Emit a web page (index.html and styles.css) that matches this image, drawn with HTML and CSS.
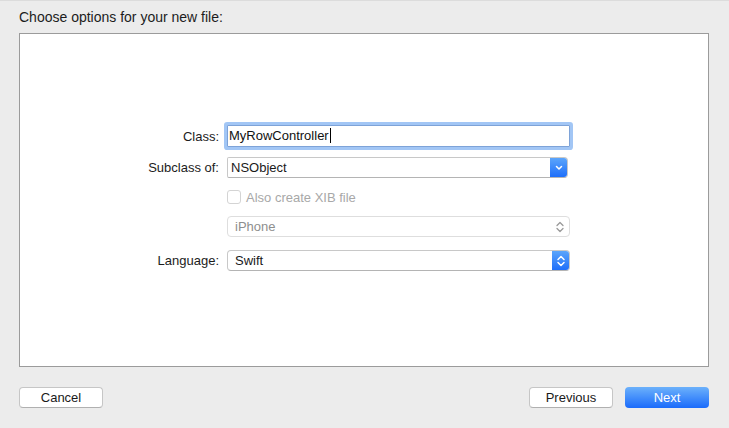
FILE: index.html
```html
<!DOCTYPE html>
<html>
<head>
<meta charset="utf-8">
<link rel="stylesheet" href="styles.css">
</head>
<body>
<div class="sheet">
  <div class="title">Choose options for your new file:</div>
  <div class="panel">
    <div class="form">
      <div class="row row-class">
        <div class="label">Class:</div>
        <div class="field focused"><span class="caret">MyRowController</span></div>
      </div>
      <div class="row row-sub">
        <div class="label">Subclass of:</div>
        <div class="popup narrow">
          <span class="ptext tight">NSObject</span>
          <span class="pbtn blue">
            <svg width="10" height="8" viewBox="0 0 10 8"><path d="M2.5 2.5 L5 5 L7.5 2.5" fill="none" stroke="#fff" stroke-width="1.5" stroke-linecap="round" stroke-linejoin="round"/></svg>
          </span>
        </div>
      </div>
      <div class="row row-check">
        <div class="label"></div>
        <div class="check"><span class="box"></span><span class="ctext">Also create XIB file</span></div>
      </div>
      <div class="row row-dev">
        <div class="label"></div>
        <div class="popup disabled">
          <span class="ptext">iPhone</span>
          <span class="pbtn">
            <svg width="10" height="14" viewBox="0 0 10 14"><path d="M2 5.5 L5 2.5 L8 5.5 M2 8.5 L5 11.5 L8 8.5" fill="none" stroke="#9a9a9a" stroke-width="1.3" stroke-linecap="round" stroke-linejoin="round"/></svg>
          </span>
        </div>
      </div>
      <div class="row row-lang">
        <div class="label">Language:</div>
        <div class="popup">
          <span class="ptext">Swift</span>
          <span class="pbtn blue">
            <svg width="10" height="14" viewBox="0 0 10 14"><path d="M2 5.5 L5 2.5 L8 5.5 M2 8.5 L5 11.5 L8 8.5" fill="none" stroke="#fff" stroke-width="1.5" stroke-linecap="round" stroke-linejoin="round"/></svg>
          </span>
        </div>
      </div>
    </div>
  </div>
  <div class="footer">
    <div class="btn cancel">Cancel</div>
    <div class="spacer"></div>
    <div class="btn prev">Previous</div>
    <div class="btn next">Next</div>
  </div>
</div>
</body>
</html>
```
FILE: styles.css
```css
html, body {
  margin: 0;
  padding: 0;
}
body {
  width: 729px;
  height: 428px;
  background: #ececec;
  font-family: "Liberation Sans", Arial, sans-serif;
  font-size: 13px;
  color: #1a1a1a;
  overflow: hidden;
}
.sheet {
  box-sizing: border-box;
  height: 428px;
  border-top: 1px solid #dcdcdc;
  padding: 0 20px 0 19px;
}
.title {
  height: 32px;
  font-size: 14px;
  line-height: 16px;
  padding-top: 8px;
  box-sizing: border-box;
  color: #1c1c1c;
}
.panel {
  box-sizing: border-box;
  width: 690px;
  height: 334px;
  background: #fff;
  border: 1px solid #9b9b9b;
  padding-top: 91px;
}
.form {
  display: flex;
  flex-direction: column;
}
.row {
  display: flex;
  align-items: center;
  gap: 8px;
}
.label {
  width: 199px;
  text-align: right;
  flex: none;
  color: #1c1c1c;
}
.row-sub { margin-top: 10px; }
.row-check { margin-top: 12px; }
.row-dev { margin-top: 12px; }
.row-lang { margin-top: 13px; }

.field {
  box-sizing: border-box;
  width: 343px;
  height: 22px;
  border: 1px solid #7ea3d8;
  border-radius: 1px;
  box-shadow: 0 0 0 3px #a2c6f5;
  background: #fff;
  padding: 0 1px;
  line-height: 20px;
  color: #111;
}
.caret {
  border-right: 1px solid #000;
  padding-right: 1px;
}

.popup {
  box-sizing: border-box;
  width: 343px;
  height: 21px;
  border: 1px solid #c8c8c8;
  border-bottom-color: #b4b4b4;
  border-radius: 4px;
  background: #fff;
  display: flex;
  align-items: stretch;
  overflow: hidden;
}
.popup.narrow {
  width: 341px;
  border-radius: 2px 4px 4px 2px;
}
.ptext {
  flex: 1;
  padding-left: 7px;
  line-height: 19px;
  color: #1a1a1a;
}
.ptext.tight { padding-left: 3px; }
.pbtn {
  width: 18px;
  display: flex;
  align-items: center;
  justify-content: center;
}
.pbtn.blue {
  background: linear-gradient(#5fa8fb, #1b6cfa);
  margin: -1px -1px -1px 0;
  border-radius: 0 4px 4px 0;
}
.popup.disabled {
  border-color: #dedede;
}
.popup.disabled .ptext { color: #8e8e8e; }

.check {
  display: flex;
  align-items: center;
  gap: 5px;
  height: 14px;
}
.box {
  box-sizing: border-box;
  width: 14px;
  height: 14px;
  border: 1px solid #d4d4d4;
  border-radius: 3px;
  background: #fff;
}
.ctext { color: #a8a8a8; }

.footer {
  display: flex;
  align-items: center;
  margin-top: 20px;
  gap: 12px;
}
.spacer { flex: 1; }
.btn {
  box-sizing: border-box;
  width: 84px;
  height: 21px;
  line-height: 19px;
  text-align: center;
  border-radius: 4px;
  border: 1px solid #c6c6c6;
  border-bottom-color: #b0b0b0;
  background: #fff;
  color: #1a1a1a;
}
.btn.next {
  border: none;
  line-height: 21px;
  background: linear-gradient(#6cb1fb, #1a6bfb);
  color: #fff;
}
```
